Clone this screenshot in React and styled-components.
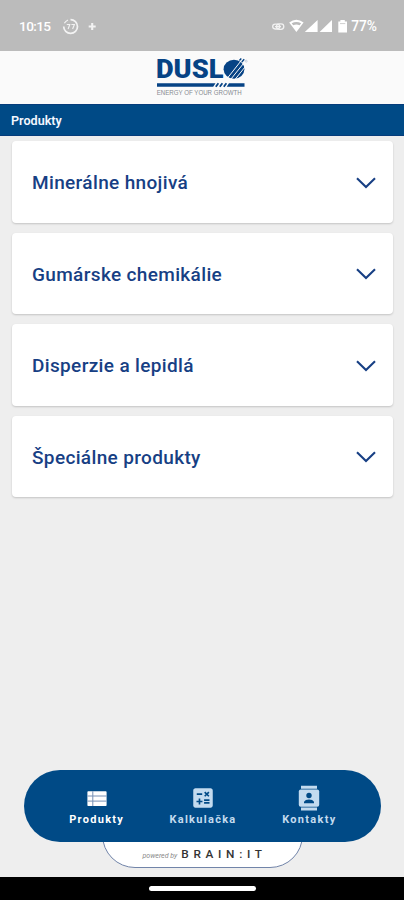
import styled, { createGlobalStyle } from "styled-components";
import { MdCalculate } from "react-icons/md";

const products = [
    "Minerálne hnojivá",
    "Gumárske chemikálie",
    "Disperzie a lepidlá",
    "Špeciálne produkty",
];

const ListIcon = () => (
    <svg width="26" height="26" viewBox="0 0 26 26">
        <rect x="3.4" y="6.2" width="19.2" height="14.8" rx=".8" fill="#fff" />
        <path d="M3.4 11h19.2M3.4 16.1h19.2M8.8 6.2v14.8" stroke="#7690b5" strokeWidth="1" />
    </svg>
);

const ContactsIcon = () => (
    <svg width="26" height="26" viewBox="0 0 26 26" fill="#c3dbef">
        <path d="M5 .8h16v3H5zM5 22.4h16v3H5z" />
        <rect x="2.8" y="4.5" width="20.4" height="17.2" rx="2" />
        <circle cx="13" cy="10.5" r="2.7" fill="#004a86" />
        <path d="M8 18.2v-1.4Q9.2 14.6 13 14.6T18 16.8v1.4z" fill="#004a86" />
    </svg>
);

const tabs = [
    { label: "Produkty", Icon: ListIcon, active: true },
    { label: "Kalkulačka", Icon: MdCalculate },
    { label: "Kontakty", Icon: ContactsIcon },
];

const StatusIcons = () => (
    <svg width="76" height="16" viewBox="272 18 76 16" fill="#fff">
        <g fill="none" stroke="#f2f2f2" strokeWidth="1.3">
            <rect x="272.7" y="24.2" width="7" height="4.8" rx="2.4" />
            <rect x="276.5" y="23.8" width="7.3" height="5.6" rx="2.8" />
            <path d="M275 26.6h6" />
        </g>
        <path d="M289.2 22.6Q296.3 17 303.6 22.6L296.4 32Z" />
        <path d="M291.7 23.3Q296.4 20.5 301.1 23.3L299.6 25.2Q296.4 23.6 293.2 25.2Z" fill="#bbb" />
        <path d="M304.8 32L317.6 20V32ZM319.6 32L332 20V32Z" />
        <path d="M338.3 21.4H340.4V20H344.8V21.4H347V32.5H338.3Z" />
        <path d="M340 23.6h5.3" stroke="#cfcfcf" />
    </svg>
);

const ActivityIcon = () => (
    <svg width="36" height="18" viewBox="62 17 36 18" fill="none" stroke="#f3f3f3">
        <path d="M70.5 19.6A6.9 6.9 0 1 1 63.7 26.5" strokeWidth="1.7" />
        <path d="M64.4 23.2A6.9 6.9 0 0 1 68 20" strokeWidth="1.2" />
        <path d="M66.8 24.5h3l-1.7 4.5M71.4 24.5h3l-1.8 4.5" strokeWidth="1.1" />
        <path d="M88.7 26.5h7M92.2 23v7" strokeWidth="2.1" />
    </svg>
);

const Logo = () => (
    <svg width="94" height="42" viewBox="155 56 94 42" overflow="visible">
        <text x="156" y="78.3" textLength="67.5" lengthAdjust="spacingAndGlyphs" fill="#064385" fontFamily="Roboto, sans-serif" fontSize="26" fontWeight="900">DUSL</text>
        <ellipse cx="234" cy="69.3" rx="10.4" ry="9.5" fill="#064385" />
        <path d="M227.5 78L242.5 59M231 79L245.5 61M235 79.5L247 64.5" stroke="#fafafa" strokeWidth="1" />
        <path d="M239.4 60.5L241.3 58.5M241.8 62L244.2 59.3" stroke="#064385" strokeWidth="1.4" />
        <path d="M157 83.2H215.5L213.2 86.7H157ZM229 83.2H244.5V86.7H226.7Z" fill="#064385" />
        <path d="M215.8 86.7L218.4 83.2M219.8 86.7L222.4 83.2M223.8 86.7L226.4 83.2" stroke="#064385" strokeWidth="1.8" />
        <text x="156.7" y="94.8" textLength="85" lengthAdjust="spacingAndGlyphs" fill="#888c92" fontFamily="Liberation Sans, sans-serif" fontSize="6.3">ENERGY OF YOUR GROWTH</text>
        <circle cx="246.2" cy="61.2" r="1" fill="none" stroke="#9aabc3" strokeWidth=".5" />
    </svg>
);

const Chevron = () => (
    <svg width="20" height="12" viewBox="0 0 20 12" fill="none" stroke="#173f84" strokeWidth="2.1">
        <path d="M1 1.3L10 10L19 1.3" />
    </svg>
);

const App = () => {
    return (
        <Screen>
            <GlobalStyle />
            <StatusBar>
                <Clock>10:15</Clock>
                <ActivityIcon />
                <StatusRight>
                    <StatusIcons />
                    <span>77%</span>
                </StatusRight>
            </StatusBar>
            <Header>
                <Logo />
            </Header>
            <PageTitle>Produkty</PageTitle>
            <ProductList>
                {products.map((name) => (
                    <ProductCard key={name}>
                        <span>{name}</span>
                        <Chevron />
                    </ProductCard>
                ))}
            </ProductList>
            <Footer>
                <TabBar>
                    {tabs.map(({ label, Icon, active }) => (
                        <Tab key={label} $active={active}>
                            <Icon size={26} />
                            <span>{label}</span>
                        </Tab>
                    ))}
                </TabBar>
                <PoweredBy>
                    <small>powered by</small>
                    <Brand>BRAIN:IT</Brand>
                </PoweredBy>
            </Footer>
            <SystemBar>
                <HomeHandle />
            </SystemBar>
        </Screen>
    )
}

const GlobalStyle = createGlobalStyle`
    * {
        box-sizing: border-box;
    }

    body {
        margin: 0;
        background: #eee;
        font-family: Roboto, sans-serif;
    }

    svg {
        display: block;
        flex-shrink: 0;
    }
`

const Screen = styled.div`
    display: flex;
    flex-direction: column;
    width: 404px;
    height: 900px;
    background: #eee;
    overflow: hidden;
`

const StatusBar = styled.div`
    display: flex;
    align-items: center;
    height: 51px;
    padding: 1px 27px 0 19px;
    background: #bbb;
    color: #fff;
    font-size: 13.8px;
    font-weight: 500;
`

const Clock = styled.span`
    width: 43px;
    font-size: 13.6px;
    letter-spacing: -0.6px;
`

const StatusRight = styled.div`
    display: flex;
    align-items: center;
    gap: 3px;
    margin-left: auto;
`

const Header = styled.header`
    display: flex;
    justify-content: center;
    height: 53px;
    padding-top: 5px;
    background: #fafafa;
`

const PageTitle = styled.h1`
    display: flex;
    align-items: center;
    height: 32px;
    margin: 0;
    padding-left: 11px;
    background: #004a86;
    border-top: 1px solid #063c7b;
    border-bottom: 1px solid #063c7b;
    color: #f4f7ff;
    font-size: 12.6px;
    font-weight: 600;
`

const ProductList = styled.main`
    display: flex;
    flex: 1;
    flex-direction: column;
    gap: 10px;
    padding: 5px 11px 0 12px;
`

const ProductCard = styled.button`
    display: flex;
    align-items: center;
    justify-content: space-between;
    height: 81.5px;
    padding: 2px 17px 0 20px;
    border: 0;
    border-radius: 4px;
    background: #fff;
    box-shadow: 0 1px 2px rgba(0, 0, 0, 0.18);
    color: #173f84;
    font-family: inherit;
    font-size: 19px;
    font-weight: 500;
    letter-spacing: 0.35px;
`

const Footer = styled.footer`
    display: flex;
    flex-direction: column;
    align-items: center;
    height: 107px;
`

const TabBar = styled.nav`
    display: flex;
    z-index: 1;
    flex-shrink: 0;
    width: 357px;
    height: 72px;
    padding: 0 18px 0 20px;
    border-radius: 36px;
    background: #004a86;
`

const Tab = styled.div`
    display: flex;
    flex: 1;
    flex-direction: column;
    align-items: center;
    gap: 2px;
    padding-top: 15px;
    color: ${({ $active }) => ($active ? "#fff" : "#c3dbef")};
    font-size: 11px;
    font-weight: 700;
    line-height: 13px;
    letter-spacing: 1.3px;
`

const PoweredBy = styled.div`
    display: flex;
    flex-shrink: 0;
    align-items: baseline;
    justify-content: flex-start;
    gap: 4px;
    width: 201px;
    height: 42px;
    margin-top: -16px;
    padding: 21px 0 0 40px;
    border: 1px solid #7184a9;
    border-radius: 0 0 33px 33px;
    background: #fff;

    small {
        color: #888;
        font-size: 7px;
        font-style: italic;
    }
`

const Brand = styled.span`
    color: #333;
    font-size: 11.8px;
    font-weight: 500;
    line-height: 13px;
    letter-spacing: 4.7px;
`

const SystemBar = styled.div`
    display: flex;
    align-items: center;
    justify-content: center;
    height: 23px;
    background: #000;
`

const HomeHandle = styled.div`
    width: 107px;
    height: 5px;
    border-radius: 3px;
    background: #fff;
`

export default App;
